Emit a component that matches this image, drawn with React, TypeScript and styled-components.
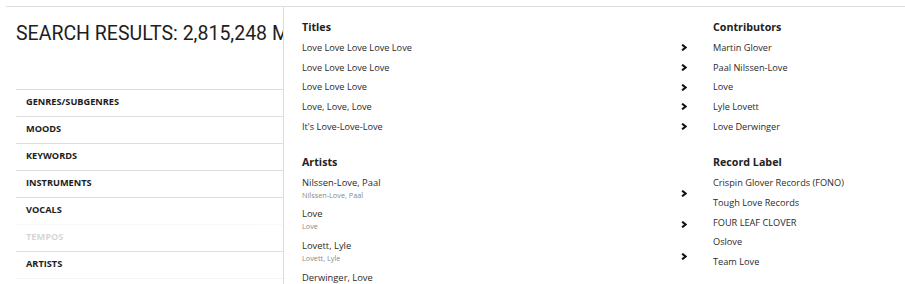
import React from 'react';
import styled, { createGlobalStyle } from 'styled-components';

const GlobalStyle = createGlobalStyle`
  html, body {
    margin: 0;
    padding: 0;
    background: #ffffff;
    overflow: hidden;
  }
  body {
    font-family: 'Open Sans', 'Liberation Sans', sans-serif;
  }
`;

const Page = styled.div`
  position: relative;
  height: 278px;
  margin: 6px 0 0 6px;
  border-top: 1px solid #dedede;
  overflow: hidden;
`;

const Main = styled.div`
  padding-left: 10px;
`;

const Heading = styled.h1`
  margin: 15px 0 0;
  font-family: Roboto, 'Liberation Sans', sans-serif;
  font-weight: 400;
  font-size: 19.5px;
  line-height: 24px;
  color: #1e1e1e;
  white-space: nowrap;
`;

const Nav = styled.ul`
  list-style: none;
  margin: 43px 0 0;
  padding: 0;
  width: 420px;
  border-bottom: 1px solid #f3f3f3;
`;

const NavRow = styled.li<{ $disabled?: boolean }>`
  border-top: 1px solid #dddddd;
  padding: 0 0 3px 10px;
  height: 23px;
  line-height: 23px;
  font-size: 9.2px;
  font-weight: 700;
  text-transform: uppercase;
  color: #1c1c1c;
  opacity: ${(p) => (p.$disabled ? 0.18 : 1)};
`;

const Dropdown = styled.div`
  position: absolute;
  top: 0;
  left: 277px;
  right: 0;
  bottom: 0;
  background: #ffffff;
  border-left: 1px solid #dddddd;
  padding: 12px 18px 0;
  display: grid;
  grid-template-columns: 385px 1fr;
  column-gap: 26px;
  align-items: start;
`;

const Column = styled.div`
  display: flex;
  flex-direction: column;
`;

const Section = styled.section`
  & + & {
    margin-top: 18px;
  }
`;

const SectionTitle = styled.h3`
  margin: 0 0 3px;
  font-size: 10.7px;
  line-height: 16px;
  font-weight: 700;
  color: #222222;
`;

const Item = styled.div`
  display: flex;
  justify-content: space-between;
  align-items: center;
  height: 19.67px;
  font-size: 9.2px;
  line-height: 19.67px;
  color: #2b2b2b;
  white-space: nowrap;
`;

const ArtistItem = styled.div`
  display: flex;
  justify-content: space-between;
  align-items: flex-start;
  height: 31.7px;
  box-sizing: border-box;
  padding-top: 2.3px;
`;

const ArtistName = styled.div`
  font-size: 9.4px;
  line-height: 14px;
  color: #2b2b2b;
`;

const ArtistSub = styled.div`
  font-size: 7.3px;
  line-height: 10px;
  color: #888888;
`;

const ChevronWrap = styled.span<{ $top?: number }>`
  display: flex;
  margin-top: ${(p) => p.$top ?? 0}px;
`;

const Chevron = ({ top }: { top?: number }) => (
  <ChevronWrap $top={top}>
    <svg width="6" height="7" viewBox="0 0 6 7">
      <path d="M1.1 0.7 L4.6 3.5 L1.1 6.3" fill="none" stroke="#111" strokeWidth="2.1" />
    </svg>
  </ChevronWrap>
);

const navItems = [
  { label: 'Genres/Subgenres' },
  { label: 'Moods' },
  { label: 'Keywords' },
  { label: 'Instruments' },
  { label: 'Vocals' },
  { label: 'Tempos', disabled: true },
  { label: 'Artists' },
];

const titles = [
  'Love Love Love Love Love',
  'Love Love Love Love',
  'Love Love Love',
  'Love, Love, Love',
  "It's Love-Love-Love",
];

const artists = [
  { name: 'Nilssen-Love, Paal', sub: 'Nilssen-Love, Paal' },
  { name: 'Love', sub: 'Love' },
  { name: 'Lovett, Lyle', sub: 'Lovett, Lyle' },
  { name: 'Derwinger, Love', sub: 'Derwinger, Love' },
];

const contributors = ['Martin Glover', 'Paal Nilssen-Love', 'Love', 'Lyle Lovett', 'Love Derwinger'];

const labels = ['Crispin Glover Records (FONO)', 'Tough Love Records', 'FOUR LEAF CLOVER', 'Oslove', 'Team Love'];

const App = () => {
  return (
    <>
      <GlobalStyle />
      <Page>
        <Main>
          <Heading>SEARCH RESULTS: 2,815,248 MATCHES</Heading>
          <Nav>
            {navItems.map((n) => (
              <NavRow key={n.label} $disabled={n.disabled}>
                {n.label}
              </NavRow>
            ))}
          </Nav>
        </Main>

        <Dropdown>
          <Column>
            <Section>
              <SectionTitle>Titles</SectionTitle>
              {titles.map((t) => (
                <Item key={t}>
                  <span>{t}</span>
                  <Chevron />
                </Item>
              ))}
            </Section>
            <Section>
              <SectionTitle>Artists</SectionTitle>
              {artists.map((a) => (
                <ArtistItem key={a.name}>
                  <div>
                    <ArtistName>{a.name}</ArtistName>
                    <ArtistSub>{a.sub}</ArtistSub>
                  </div>
                  <Chevron top={14.2} />
                </ArtistItem>
              ))}
            </Section>
          </Column>
          <Column>
            <Section>
              <SectionTitle>Contributors</SectionTitle>
              {contributors.map((c) => (
                <Item key={c}>
                  <span>{c}</span>
                </Item>
              ))}
            </Section>
            <Section>
              <SectionTitle>Record Label</SectionTitle>
              {labels.map((l) => (
                <Item key={l}>
                  <span>{l}</span>
                </Item>
              ))}
            </Section>
          </Column>
        </Dropdown>
      </Page>
    </>
  );
};

export default App;
